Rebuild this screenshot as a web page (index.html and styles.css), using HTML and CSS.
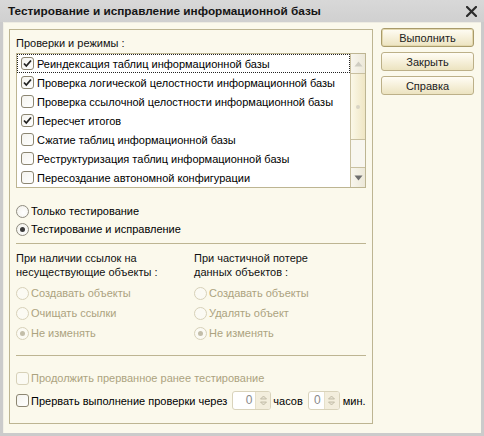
FILE: index.html
```html
<!DOCTYPE html>
<html lang="ru">
<head>
<meta charset="utf-8">
<title>Тестирование и исправление информационной базы</title>
<link rel="stylesheet" href="styles.css">
</head>
<body>
<div class="window">
  <div class="titlebar">
    <span class="title">Тестирование и исправление информационной базы</span>
    <svg class="close" width="11" height="11" viewBox="0 0 11 11"><path d="M1 1 L10 10 M10 1 L1 10" stroke="#2b2b2b" stroke-width="2.2" stroke-linecap="square"/></svg>
  </div>
  <div class="client">
    <div class="group">
      <div class="caption">Проверки и режимы :</div>
      <div class="listbox">
        <div class="items">
          <div class="item focused"><span class="cb checked"><svg width="11" height="11" viewBox="0 0 11 11"><path d="M2 5.5 L4.3 8 L9 2.5" fill="none" stroke="#222" stroke-width="1.8"/></svg></span>Реиндексация таблиц информационной базы</div>
          <div class="item"><span class="cb checked"><svg width="11" height="11" viewBox="0 0 11 11"><path d="M2 5.5 L4.3 8 L9 2.5" fill="none" stroke="#222" stroke-width="1.8"/></svg></span>Проверка логической целостности информационной базы</div>
          <div class="item"><span class="cb"></span>Проверка ссылочной целостности информационной базы</div>
          <div class="item"><span class="cb checked"><svg width="11" height="11" viewBox="0 0 11 11"><path d="M2 5.5 L4.3 8 L9 2.5" fill="none" stroke="#222" stroke-width="1.8"/></svg></span>Пересчет итогов</div>
          <div class="item"><span class="cb"></span>Сжатие таблиц информационной базы</div>
          <div class="item"><span class="cb"></span>Реструктуризация таблиц информационной базы</div>
          <div class="item"><span class="cb"></span>Пересоздание автономной конфигурации</div>
        </div>
        <div class="scrollbar">
          <div class="sb-btn sb-up"><svg width="9" height="6" viewBox="0 0 9 6"><path d="M0.5 5.5 L4.5 0.5 L8.5 5.5 Z" fill="#cfcdc2"/></svg></div>
          <div class="sb-thumb"><span class="grip"></span></div>
          <div class="sb-track"></div>
          <div class="sb-btn sb-down"><svg width="9" height="6" viewBox="0 0 9 6"><path d="M0.5 0.5 L8.5 0.5 L4.5 5.5 Z" fill="#6e6e6e"/></svg></div>
        </div>
      </div>

      <div class="modes">
        <div class="opt"><span class="rb"></span>Только тестирование</div>
        <div class="opt"><span class="rb on"></span>Тестирование и исправление</div>
      </div>

      <div class="sep sep-top"></div>

      <div class="columns">
        <div class="col">
          <div class="col-label">При наличии ссылок на<br>несуществующие объекты :</div>
          <div class="opt opt-wide disabled"><span class="rb"></span>Создавать объекты</div>
          <div class="opt opt-wide disabled"><span class="rb"></span>Очищать ссылки</div>
          <div class="opt opt-wide disabled"><span class="rb on"></span>Не изменять</div>
        </div>
        <div class="col">
          <div class="col-label">При частичной потере<br>данных объектов :</div>
          <div class="opt opt-wide disabled"><span class="rb"></span>Создавать объекты</div>
          <div class="opt opt-wide disabled"><span class="rb"></span>Удалять объект</div>
          <div class="opt opt-wide disabled"><span class="rb on"></span>Не изменять</div>
        </div>
      </div>

      <div class="sep sep-bottom"></div>

      <div class="opt opt-wide disabled"><span class="cb"></span>Продолжить прерванное ранее тестирование</div>
      <div class="opt opt-break"><span class="cb"></span>Прервать выполнение проверки через
        <span class="spin spin-hours"><span class="spin-val">0</span><span class="spin-btns"><svg width="9" height="13" viewBox="0 0 9 13"><path d="M1.5 5 L4.5 2 L7.5 5 Z M1.5 8 L4.5 11 L7.5 8 Z" fill="#e6e2d2" stroke="#b9b39c" stroke-width="0.8"/></svg></span></span>
        <span class="unit">часов</span>
        <span class="spin spin-mins"><span class="spin-val">0</span><span class="spin-btns"><svg width="9" height="13" viewBox="0 0 9 13"><path d="M1.5 5 L4.5 2 L7.5 5 Z M1.5 8 L4.5 11 L7.5 8 Z" fill="#e6e2d2" stroke="#b9b39c" stroke-width="0.8"/></svg></span></span>
        <span class="unit">мин.</span>
      </div>
    </div>

    <div class="buttons">
      <div class="btn btn-default">Выполнить</div>
      <div class="btn">Закрыть</div>
      <div class="btn">Справка</div>
    </div>
  </div>
</div>
</body>
</html>
```

FILE: styles.css
```css
* { box-sizing: border-box; }
html, body { margin: 0; padding: 0; }
body {
  width: 484px;
  height: 436px;
  overflow: hidden;
  font-family: "Liberation Sans", Arial, sans-serif;
  font-size: 11px;
  color: #000;
  background: #cdcdcd;
}
.window {
  width: 484px;
  height: 436px;
  background: #cbcbcb;
  display: flex;
  flex-direction: column;
}
.titlebar {
  height: 22px;
  flex: none;
  display: flex;
  align-items: center;
  justify-content: space-between;
  padding: 0 7px 0 8px;
  background: linear-gradient(#d8d8d8, #d0d0d0);
}
.title {
  font-weight: bold;
  font-size: 11.8px;
  color: #151515;
}
.close { display: block; }

.client {
  flex: 1;
  margin: 0 3px 3px;
  background: #fbf9ec;
  border-top: 1px solid #eeece2;
  border-left: 1px solid #f2f0e6;
  display: flex;
  align-items: flex-start;
  padding: 6px 0 0 5px;
  gap: 8px;
}

.group {
  width: 364px;
  height: 395px;
  border: 1px solid #bdb592;
  padding: 0 6px 12px;
  display: flex;
  flex-direction: column;
}
.caption {
  margin-top: 6px;
  height: 15px;
  line-height: 15px;
  color: #111;
}
.listbox {
  margin-top: 2px;
  height: 135px;
  border: 1px solid #bdb592;
  background: #fff;
  display: flex;
  overflow: hidden;
}
.items {
  flex: 1;
  display: flex;
  flex-direction: column;
}
.item {
  height: 19px;
  flex: none;
  display: flex;
  align-items: center;
  padding-left: 4px;
  white-space: nowrap;
}
.item.focused {
  outline: 1px dotted #222;
  outline-offset: -1px;
}
.cb {
  width: 13px;
  height: 13px;
  flex: none;
  border: 1px solid #8c8672;
  border-radius: 3px;
  background: linear-gradient(135deg, #f4f3ee, #ffffff);
  margin-right: 3px;
  display: flex;
  align-items: center;
  justify-content: center;
}
.cb svg { display: block; }

.scrollbar {
  width: 15px;
  flex: none;
  border-left: 1px solid #c9c0a0;
  display: flex;
  flex-direction: column;
}
.sb-btn {
  height: 20px;
  flex: none;
  display: flex;
  align-items: center;
  justify-content: center;
  background: linear-gradient(90deg, #f8f6ee, #ece8d8);
}
.sb-up { border-bottom: 1px solid #c9c0a0; }
.sb-down { border-top: 1px solid #c9c0a0; flex: 1; }
.sb-thumb {
  height: 66px;
  flex: none;
  border-bottom: 1px solid #c9c0a0;
  background: linear-gradient(90deg, #fbf8e8, #efe6c4);
  display: flex;
  align-items: center;
  justify-content: center;
}
.grip {
  width: 4px;
  height: 4px;
  border-radius: 50%;
  background: #d8d4c4;
}
.sb-track {
  height: 27px;
  flex: none;
  background: #f8f6ef;
}

.modes {
  margin-top: 14px;
  display: flex;
  flex-direction: column;
}
.opt {
  height: 18px;
  display: flex;
  align-items: center;
  white-space: nowrap;
}
.opt-wide { height: 20px; }
.opt .cb { margin-right: 2px; }
.rb {
  width: 13px;
  height: 13px;
  flex: none;
  border: 1px solid #8f8c80;
  border-radius: 50%;
  background: radial-gradient(circle at 60% 60%, #ffffff, #f0efe8);
  margin-right: 2px;
  display: flex;
  align-items: center;
  justify-content: center;
}
.rb.on::after {
  content: "";
  width: 5px;
  height: 5px;
  border-radius: 50%;
  background: #3a3a3a;
}
.disabled { color: #aca37f; }
.disabled .rb, .disabled .cb {
  border-color: #d7d1b8;
  background: #fbfaf3;
}
.disabled .rb.on::after { background: #c3bea9; }

.sep {
  height: 1px;
  flex: none;
  background: #bdb592;
}
.sep-top { margin-top: 5px; }
.sep-bottom { margin-top: 12px; margin-bottom: 12px; }

.columns {
  margin-top: 7px;
  display: grid;
  grid-template-columns: 178px 1fr;
}
.col {
  display: flex;
  flex-direction: column;
}
.col-label {
  line-height: 14px;
  height: 28px;
  margin-bottom: 4px;
  color: #111;
}

.opt-break {
  margin-top: 2px;
  height: 21px;
}
.spin {
  height: 19px;
  border: 1px solid #d9d3bb;
  border-radius: 3px;
  background: #fff;
  display: flex;
  align-items: stretch;
  margin-left: 5px;
  margin-right: 2px;
  overflow: hidden;
}
.spin-hours { width: 39px; }
.spin-mins { width: 32px; margin-left: 5px; margin-right: 3px; }
.spin-val {
  flex: 1;
  text-align: right;
  padding-right: 3px;
  line-height: 17px;
  color: #8a8a8a;
  font-size: 12px;
}
.spin-btns {
  width: 15px;
  flex: none;
  background: #f3eedd;
  border-left: 1px solid #e6e0ca;
  display: flex;
  align-items: center;
  justify-content: center;
}
.spin-btns svg { display: block; }
.unit { color: #000; }

.buttons {
  width: 93px;
  margin-top: -1px;
  display: flex;
  flex-direction: column;
  gap: 5px;
}
.btn {
  height: 19px;
  border: 1px solid #bcb088;
  border-radius: 3px;
  background: linear-gradient(#fffdf5, #f6f0da 50%, #ece3c0);
  display: flex;
  align-items: center;
  justify-content: center;
  color: #222;
}
.btn-default {
  border-color: #a99b6a;
  box-shadow: inset 0 0 0 1px #e3d8ae;
}
```
